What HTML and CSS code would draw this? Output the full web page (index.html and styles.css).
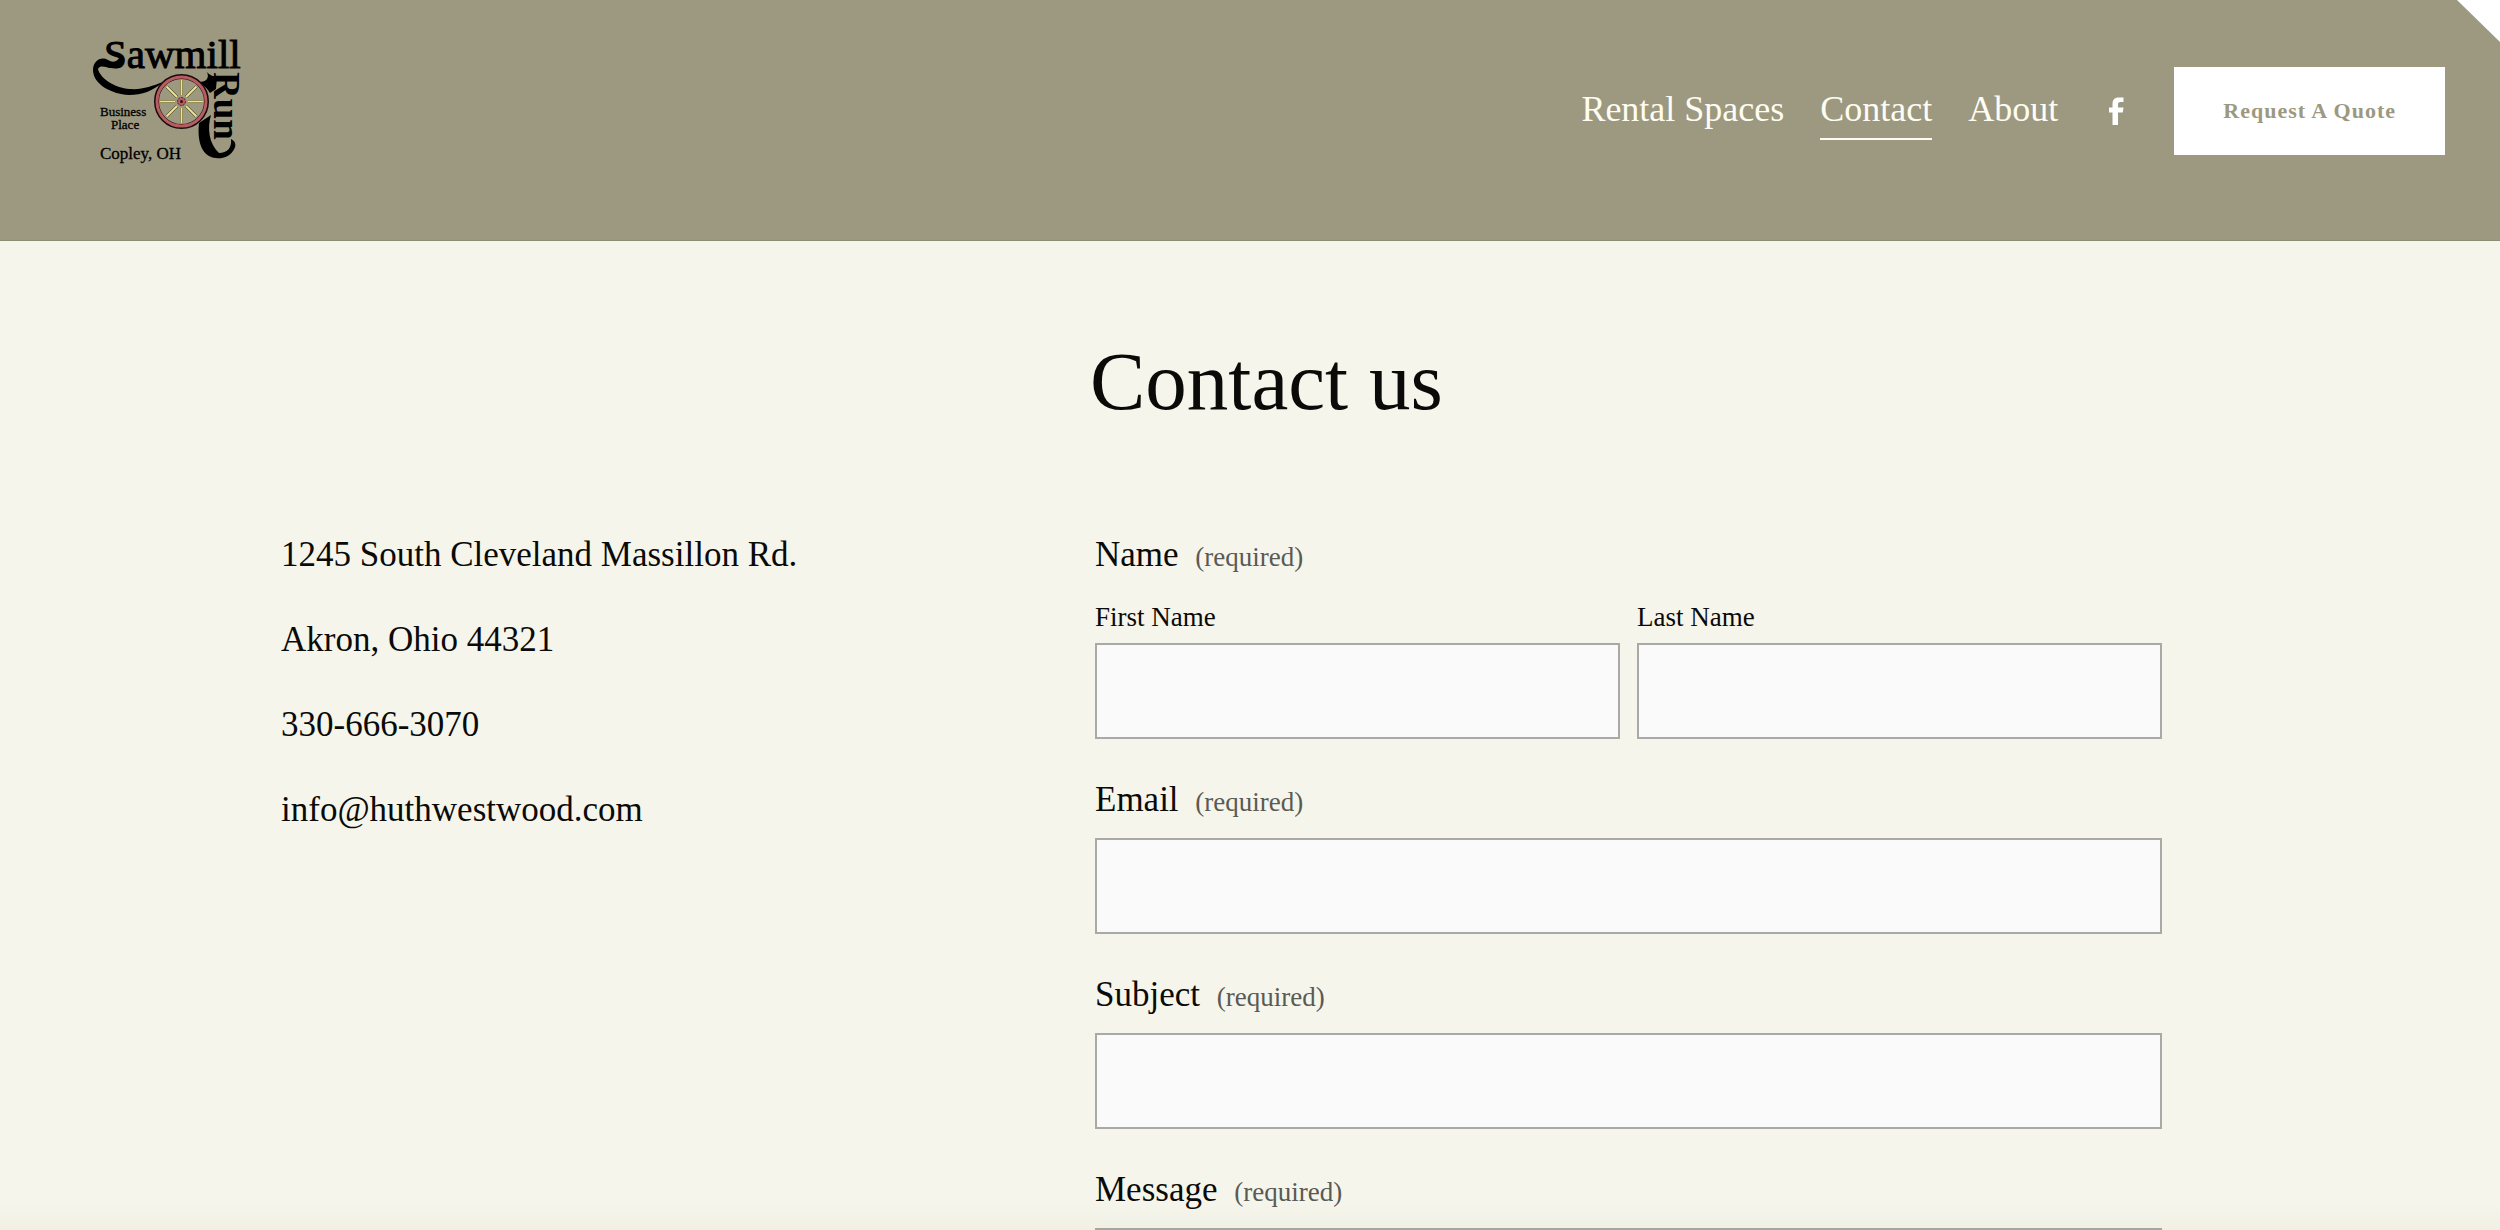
FILE: index.html
```html
<!DOCTYPE html>
<html lang="en">
<head>
  <meta charset="UTF-8" />
  <meta name="viewport" content="width=device-width, initial-scale=1.0"/>
  <title>Contact - Sawmill Run Business Place</title>
  <link rel="stylesheet" href="styles.css">
</head>
<body>
  <header class="site-header">
    <a class="logo" href="#" aria-label="Sawmill Run Business Place">
      <svg width="180" height="182" viewBox="0 0 180 182">
        <text class="logo-name" x="24" y="48">Sawmill</text>
        <text class="logo-run" transform="translate(134 52) rotate(90)">Run</text>
        <!-- tail of the S -->
        <path d="M43 37C43 44 37 48 30 48C25 47 20 45 18 49C20 58 34 68 50 69C62 70 72 66 83 62C73 71 62 75 49 75C31 74 13 64 13 50C13 41 21 36 28 40C33 43 38 42 40 36Z"/>
        <!-- tail of the n -->
        <path d="M119 103L131 95C127 108 129 124 139 133C147 133 152 128 151 119C157 122 156 127 153 131C149 137 142 139 136 138C122 137 117 122 119 103Z"/>
        <path d="M127 52C130 56 134 56 137 57L136 69L130 73C127 68 123 65 119 62C125 62 130 59 127 52Z"/>
        <!-- wheel -->
        <circle cx="101.500" cy="81.500" r="25" fill="#9c9980" stroke="#1a0b0b" stroke-width="5"/>
        <circle cx="101.500" cy="81.500" r="24.500" fill="none" stroke="#b55d62" stroke-width="3"/>
        <g stroke="#3a371c" stroke-width="3">
          <path d="M101.500 60V75M101.500 88V103M80 81.500H95M108 81.500H123M86.500 66.500L97 77M106 86L116.500 96.500M116.500 66.500L106 77M97 86L86.500 96.500"/>
        </g>
        <g stroke="#eee68c" stroke-width="2">
          <path d="M101.500 60V75M101.500 88V103M80 81.500H95M108 81.500H123M86.500 66.500L97 77M106 86L116.500 96.500M116.500 66.500L106 77M97 86L86.500 96.500"/>
        </g>
        <circle cx="101.500" cy="81.500" r="4" fill="#b55d62" stroke="#4a1d20" stroke-width="1" stroke-dasharray="2 1"/>
        <circle cx="101.500" cy="81.500" r="1.500" fill="#3a1416"/>
        <text class="logo-small" x="20" y="96">Business</text>
        <text class="logo-small" x="31" y="109">Place</text>
        <text class="logo-town" x="20" y="139">Copley, OH</text>
      </svg>
    </a>

    <div class="header-right">
      <nav class="main-nav">
        <a href="#">Rental Spaces</a>
        <a href="#" class="active">Contact</a>
        <a href="#">About</a>
      </nav>
      <a class="social" href="#" aria-label="Facebook">
        <svg width="28" height="28" viewBox="0 0 28 28">
          <path fill="#fff" d="M10.500 28V15.500H7V10.500H10.500V7C10.500 2.500 13 0.500 16.500 0.500H21.500V5H18.500C16.800 5 16 5.800 16 7.500V10.500H21.500L20.800 15.500H16V28Z"/>
        </svg>
      </a>
      <a class="quote-btn" href="#">Request A Quote</a>
    </div>
  </header>

  <main class="contact">
    <h1>Contact us</h1>

    <address class="details">
      <p>1245 South Cleveland Massillon Rd.</p>
      <p>Akron, Ohio 44321</p>
      <p>330-666-3070</p>
      <p>info@huthwestwood.com</p>
    </address>

    <form class="contact-form">
      <fieldset class="field">
        <legend class="title">Name <span class="required">(required)</span></legend>
        <div class="name-row">
          <div class="sub-field">
            <label for="first-name">First Name</label>
            <input type="text" id="first-name" required />
          </div>
          <div class="sub-field">
            <label for="last-name">Last Name</label>
            <input type="text" id="last-name" required />
          </div>
        </div>
      </fieldset>

      <div class="field">
        <label class="title" for="email">Email <span class="required">(required)</span></label>
        <input type="email" id="email" required />
      </div>

      <div class="field">
        <label class="title" for="subject">Subject <span class="required">(required)</span></label>
        <input type="text" id="subject" required />
      </div>

      <div class="field">
        <label class="title" for="message">Message <span class="required">(required)</span></label>
        <textarea id="message" required></textarea>
      </div>
    </form>
  </main>

  <div class="corner"></div>
  <div class="bottom-shade"></div>
</body>
</html>
```
FILE: styles.css
```css
:root {
  --bg: #f5f5eb;
  --olive: #9c9980;
  --text: #0a0a08;
  --muted: #5a5a54;
  --border: #a9aaa5;
  --field: #fafafa;
}

* {
  box-sizing: border-box;
}

body {
  margin: 0;
  font-family: "Liberation Serif", "Times New Roman", serif;
  background-color: var(--bg);
  color: var(--text);
}

a {
  color: inherit;
  text-decoration: none;
}

/* header */
.site-header {
  display: flex;
  justify-content: space-between;
  align-items: center;
  padding: 20px 55px 38px 80px;
  border-bottom: 1px solid #8f8c74;
  background: var(--olive);
}

.logo svg,
.social svg {
  display: block;
}

.logo-name {
  font-size: 41px;
  stroke: #000;
  stroke-width: 1px;
}

.logo-run {
  font-size: 37px;
  font-weight: bold;
}

.logo-small {
  font-size: 13px;
  stroke: #000;
  stroke-width: 0.3px;
}

.logo-town {
  font-size: 17px;
  stroke: #000;
  stroke-width: 0.3px;
}

.header-right {
  display: flex;
  align-items: center;
  gap: 44px;
}

.main-nav {
  display: flex;
  gap: 36px;
}

.main-nav a {
  padding-bottom: 2px;
  border-bottom: 2px solid transparent;
  color: #fffdf3;
  font-size: 36px;
  line-height: 54px;
}

.main-nav a.active {
  border-bottom-color: #fffdf3;
}

.quote-btn {
  padding: 0 49px;
  background: #fff;
  color: var(--olive);
  font-size: 22px;
  font-weight: bold;
  letter-spacing: 1px;
  line-height: 88px;
}

/* contact section */
.contact {
  display: grid;
  grid-template-columns: 809fr 1072fr;
  row-gap: 96px;
  padding: 90px 338px 96px 281px;
}

h1 {
  grid-column: 2;
  margin: 0;
  font-size: 83px;
  font-weight: normal;
  line-height: 100px;
}

.details {
  display: flex;
  flex-direction: column;
  gap: 29px;
  font-size: 35px;
  font-style: normal;
  line-height: 56px;
}

.details p {
  margin: 0;
}

.contact-form {
  display: flex;
  flex-direction: column;
  gap: 33px;
  padding-left: 5px;
}

.field {
  display: flex;
  flex-direction: column;
  gap: 10px;
  min-width: 0;
  margin: 0;
  padding: 0;
  border: none;
}

.title {
  padding: 0;
  font-size: 35px;
  line-height: 56px;
}

.required {
  margin-left: 8px;
  color: var(--muted);
  font-size: 27px;
  line-height: 27px;
}

.name-row {
  display: flex;
  gap: 17px;
  padding-top: 16px;
}

.sub-field {
  display: flex;
  flex: 1;
  flex-direction: column;
  gap: 8px;
  font-size: 27px;
  line-height: 36px;
}

input,
textarea {
  width: 100%;
  height: 96px;
  padding: 0 24px;
  border: 2px solid var(--border);
  border-radius: 0;
  background: var(--field);
  color: var(--text);
  font-family: inherit;
  font-size: 27px;
}

textarea {
  height: 240px;
  padding: 24px;
}

/* folded page corner */
.corner {
  position: fixed;
  top: 0;
  right: 0;
  width: 43px;
  height: 42px;
  background: #fff;
  clip-path: polygon(0 0, 100% 0, 100% 100%);
}

.bottom-shade {
  position: fixed;
  right: 0;
  bottom: 0;
  left: 0;
  height: 28px;
  background: linear-gradient(rgba(90, 90, 60, 0), rgba(90, 90, 60, 0.03));
  pointer-events: none;
}
```
